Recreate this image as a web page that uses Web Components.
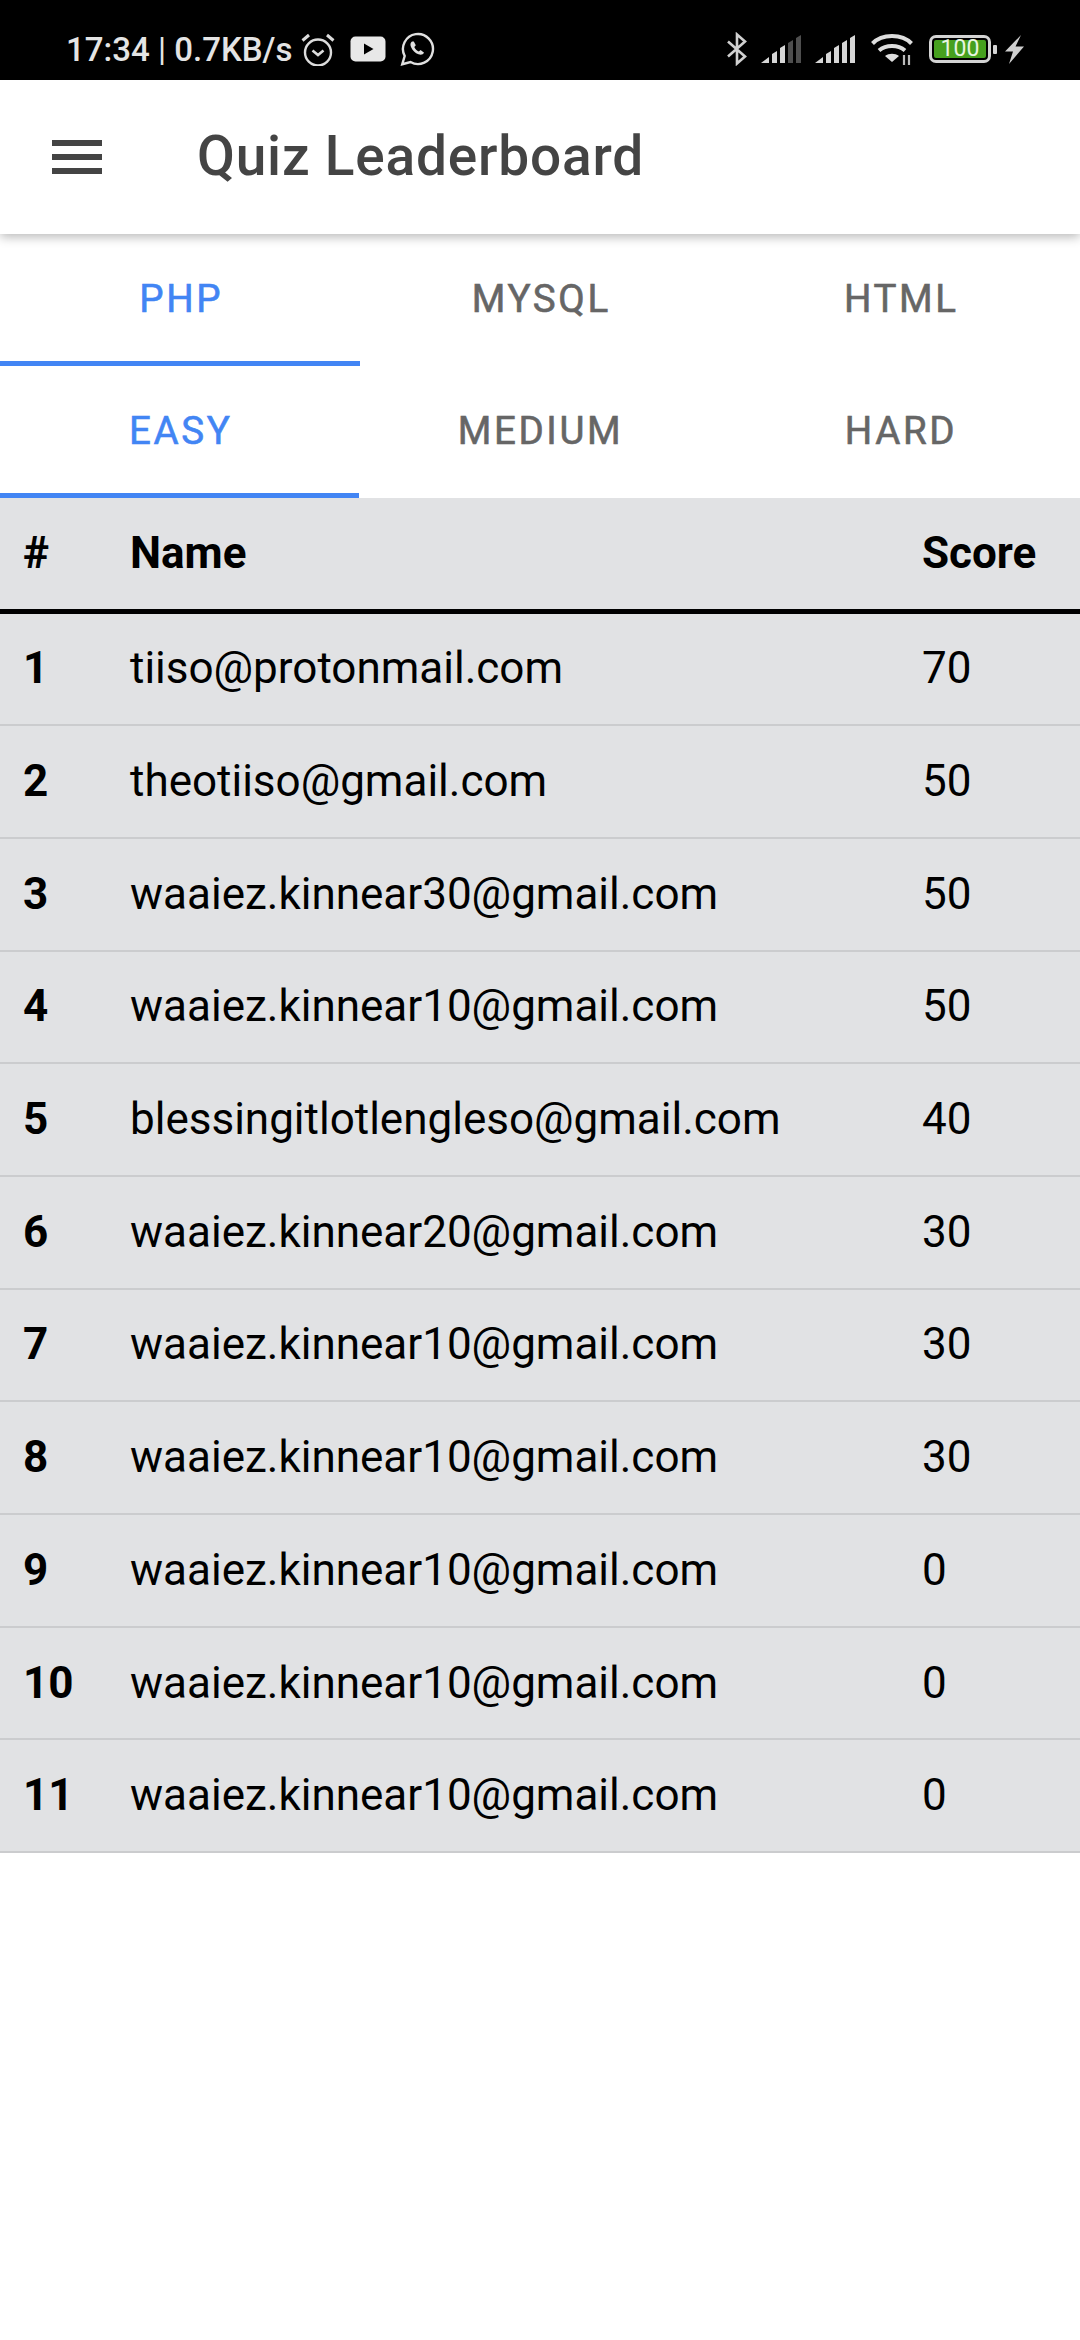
<!DOCTYPE html>
<html>
<head>
<meta charset="utf-8">
<title>Quiz Leaderboard</title>
<style>
  html, body { margin: 0; background: #fff; font-family: Roboto, "Liberation Sans", sans-serif; }
  body { width: 1080px; height: 2340px; overflow: hidden; }
</style>
</head>
<body>
<status-bar></status-bar>
<app-bar title="Quiz Leaderboard"></app-bar>
<tab-row labels="PHP,MYSQL,HTML"></tab-row>
<tab-row labels="EASY,MEDIUM,HARD" cols="359px 1fr 1fr"></tab-row>
<score-table></score-table>

<script>
class StatusBar extends HTMLElement {
  constructor () {
    super()
    this.attachShadow({ mode: 'open' })
    this.shadowRoot.innerHTML = `
      <style>
        :host { display: flex; align-items: center; justify-content: space-between; box-sizing: border-box;
          height: 80px; background: #000; color: #e4e4e4; padding: 18px 56px 0 66px; font: 500 33px Roboto, sans-serif; }
        .side { display: flex; align-items: center; }
        svg { display: block; }
        .txt { margin-right: 9px; white-space: nowrap; }
      </style>
      <div class="side">
        <span class="txt">17:34 <span style="font-weight:400">|</span> 0.7KB/s</span>
        <svg width="34" height="34" viewBox="0 0 34 34" fill="none" stroke="#dcdcdc" stroke-width="2.4">
          <circle cx="17" cy="20.500" r="13"/><path d="M11.500 18.500l5.500 4.500 5.500-4.500" stroke-width="2.600"/>
          <path d="M1.500 8.500L8 3M32.500 8.500L26 3" stroke-width="3"/>
        </svg>
        <svg style="margin-left:15px" width="36" height="26" viewBox="0 0 36 26">
          <rect width="35" height="25" x=".5" y=".5" rx="5" fill="#e8e8e8"/><path d="M14 7.500v11l9.500-5.500z" fill="#000"/>
        </svg>
        <svg style="margin-left:14px" width="35" height="34" viewBox="0 0 34 34" fill="none" stroke="#e0e0e0" stroke-width="2.400">
          <path d="M1.800 32.200l2.400-8.200A15 15 0 1 1 10 30z"/>
          <path d="M11.500 9.500c-1.600 1.200-2 3-1 5.400 1.500 3.400 4.200 6 7.500 7.400 2.500.9 4.500.3 5.600-1.500l-3.500-2.700-1.800 1.400c-2-.9-3.600-2.500-4.500-4.500l1.500-1.800-2-3.700z" fill="#e0e0e0" stroke="none"/>
        </svg>
      </div>
      <div class="side">
        <svg width="21" height="34" viewBox="0 0 21 34" fill="none" stroke="#d0d0d0" stroke-width="2.600">
          <path d="M2 9.500l17 15-8 7V2.500l8 7-17 15"/>
        </svg>
        <svg style="margin-left:14px" width="40" height="28" viewBox="0 0 40 28">
          <path d="M0 28l8-6v6z M11 28V19l5-3v12z M19 28V13l5-3v18z" fill="#d6d6d6"/><path d="M27 28V8l5-3v23zM35 28V3l5-3v28z" fill="#4e4e4e"/>
        </svg>
        <svg style="margin-left:14px" width="40" height="28" viewBox="0 0 40 28" fill="#d6d6d6">
          <path d="M0 28l8-6v6z M11 28V19l5-3v12z M19 28V13l5-3v18z M27 28V8l5-3v23zM35 28V3l5-3v28z"/>
        </svg>
        <svg style="margin-left:16px" width="42" height="32" viewBox="0 0 42 32" fill="none" stroke="#dedede" stroke-width="4">
          <path d="M1.500 10.500C11 .5 31 .5 40.500 10.500M8 17.500c7-6 19-6 26 0"/>
          <path d="M14 23c4-3 10-3 14 0l-7 6z" fill="#dedede" stroke="none"/>
          <path d="M33 22v10M38 22v10" stroke-width="2.200" stroke="#bbb"/>
        </svg>
        <battery-icon style="margin-left:16px"></battery-icon>
        <svg style="margin-left:8px" width="19" height="29" viewBox="0 0 19 29"><path d="M16 0L0 16.500h8L4 29 19 11.500h-8.500z" fill="#cfcfcf"/></svg>
      </div>`
  }
}

class BatteryIcon extends HTMLElement {
  constructor () {
    super()
    this.attachShadow({ mode: 'open' })
    this.shadowRoot.innerHTML = `
      <style>
        :host { display: flex; align-items: center; }
        .shell { box-sizing: border-box; width: 62px; height: 28px; border: 3.500px solid #d4d4d4; border-radius: 7px; padding: 2px; display: flex; }
        .fill { flex: 1; background: #46a01e; border-radius: 2px; color: #e8f5e0; font: 400 23px/17px Roboto, sans-serif; text-align: center; }
        .tip { width: 4px; height: 9px; background: #d4d4d4; margin-left: 2px; border-radius: 1px; }
      </style>
      <div class="shell"><div class="fill">100</div></div><div class="tip"></div>`
  }
}

class AppBar extends HTMLElement {
  constructor () {
    super()
    this.attachShadow({ mode: 'open' })
    this.shadowRoot.innerHTML = `
      <style>
        :host { display: flex; align-items: center; box-sizing: border-box; height: 154px; background: #fff;
          padding-left: 52px; color: #444; position: relative; box-shadow: 0 3px 10px rgba(0,0,0,.28); z-index: 2; }
        .menu { width: 50px; display: flex; flex-direction: column; gap: 8px; margin-right: 95px; }
        .menu i { display: block; height: 6px; background: #444; }
        h1 { margin: 0 0 3px; font: 500 55px Roboto, sans-serif; letter-spacing: .8px; }
      </style>
      <div class="menu"><i></i><i></i><i></i></div>
      <h1></h1>`
    this.shadowRoot.querySelector('h1').textContent = this.getAttribute('title')
  }
}

class TabRow extends HTMLElement {
  constructor () {
    super()
    this.attachShadow({ mode: 'open' })
    this.shadowRoot.innerHTML = `
      <style>
        :host { display: grid; grid-template-columns: repeat(3, 1fr); background: #fff; }
        div { box-sizing: border-box; height: 132px; display: flex; align-items: center; justify-content: center; padding: 2px 0 0 2.500px;
          border-bottom: 5px solid transparent; color: #666; font: 400 38.500px Roboto, sans-serif; letter-spacing: 2.600px;
          -webkit-text-stroke: .6px currentColor; }
        div.on { color: #4285f4; border-bottom-color: #4285f4; }
      </style>`
    if (this.hasAttribute('cols')) this.style.gridTemplateColumns = this.getAttribute('cols')
    this.getAttribute('labels').split(',').forEach((label, i) => {
      const tab = document.createElement('div')
      tab.textContent = label
      if (i === 0) tab.className = 'on'
      this.shadowRoot.appendChild(tab)
    })
  }
}

const rows = [
  ['1', 'tiiso@protonmail.com', '70'],
  ['2', 'theotiiso@gmail.com', '50'],
  ['3', 'waaiez.kinnear30@gmail.com', '50'],
  ['4', 'waaiez.kinnear10@gmail.com', '50'],
  ['5', 'blessingitlotlengleso@gmail.com', '40'],
  ['6', 'waaiez.kinnear20@gmail.com', '30'],
  ['7', 'waaiez.kinnear10@gmail.com', '30'],
  ['8', 'waaiez.kinnear10@gmail.com', '30'],
  ['9', 'waaiez.kinnear10@gmail.com', '0'],
  ['10', 'waaiez.kinnear10@gmail.com', '0'],
  ['11', 'waaiez.kinnear10@gmail.com', '0']
]

class ScoreTable extends HTMLElement {
  constructor () {
    super()
    this.attachShadow({ mode: 'open' })
    const body = rows.map(r => `<div class="row"><b>${r[0]}</b><span>${r[1]}</span><span>${r[2]}</span></div>`).join('')
    this.shadowRoot.innerHTML = `
      <style>
        :host { display: block; background: #e1e2e4; color: #000; font: 400 44px Roboto, sans-serif; }
        .row { display: grid; grid-template-columns: 107px 792px 1fr; align-items: center; box-sizing: border-box;
          height: 112.700px; padding: 0 0 1px 23px; border-bottom: 2.750px solid #cbccce; }
        .row.head { height: 115.500px; border-bottom: 5.500px solid #000; font-weight: 700; }
        b { font-weight: 700; }
      </style>
      <div class="row head"><span>#</span><span>Name</span><span>Score</span></div>
      ${body}`
  }
}

customElements.define('battery-icon', BatteryIcon)
customElements.define('status-bar', StatusBar)
customElements.define('app-bar', AppBar)
customElements.define('tab-row', TabRow)
customElements.define('score-table', ScoreTable)
</script>
</body>
</html>
